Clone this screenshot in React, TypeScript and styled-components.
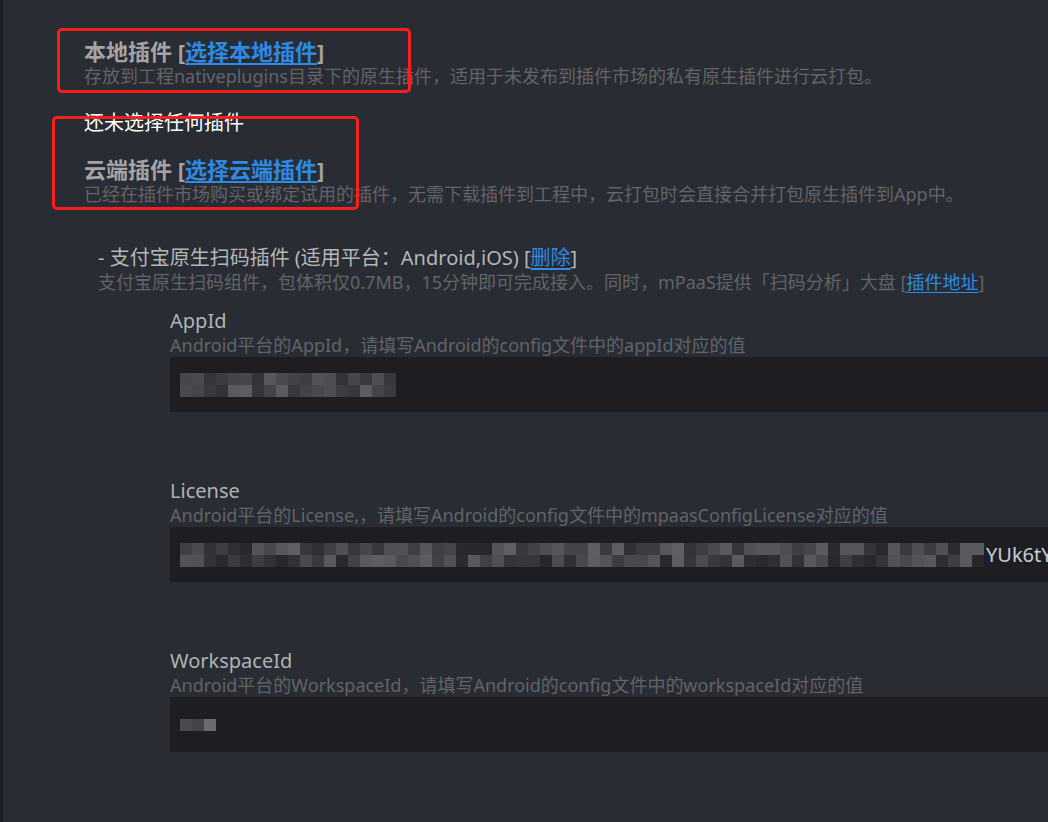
import React from "react";
import styled, { createGlobalStyle } from "styled-components";

const GlobalStyle = createGlobalStyle`
  html, body {
    margin: 0;
    padding: 0;
    background: #282c34;
  }
  body {
    font-family: "Noto Sans", "Noto Sans CJK SC", sans-serif;
  }
`;

const Page = styled.div`
  position: relative;
  min-height: 822px;
  overflow: hidden;
  background: #282c34;
  border-left: 3px solid #1c1e23;
  box-sizing: border-box;
  padding: 38px 0 40px 81px;
`;

const Section = styled.section`
  display: flex;
  flex-direction: column;
`;

const SectionTitle = styled.div`
  font-size: 22px;
  line-height: 26px;
  font-weight: 700;
  color: #a4a4a4;
  white-space: nowrap;
`;

const Link = styled.a`
  color: #2e8ae3;
  text-decoration: underline;
  text-underline-offset: 3px;
  cursor: pointer;
`;

const Hint = styled.div`
  font-size: 18px;
  line-height: 24px;
  color: #626468;
  white-space: nowrap;
`;

const EmptyNote = styled.div`
  margin-top: 23px;
  margin-bottom: 21px;
  font-size: 20px;
  line-height: 24px;
  color: #ffffff;
`;

const PluginBlock = styled.div`
  margin-top: 40px;
  padding-left: 14px;
  display: flex;
  flex-direction: column;
`;

const PluginName = styled.div`
  font-size: 20px;
  line-height: 24px;
  color: #b6b6b6;
  white-space: nowrap;
`;

const Fields = styled.div`
  margin-top: 14px;
  padding-left: 72px;
  display: flex;
  flex-direction: column;
  gap: 66px;
`;

const Field = styled.div`
  display: flex;
  flex-direction: column;
`;

const FieldLabel = styled.div`
  font-size: 20px;
  line-height: 25px;
  color: #b2b2b2;
`;

const InputBox = styled.div`
  height: 55px;
  margin-right: -20px;
  background: #1d1e23;
  display: flex;
  align-items: center;
  padding-left: 10px;
  overflow: hidden;
  white-space: nowrap;
`;

const InputText = styled.span`
  font-size: 20px;
  color: #c9ccd2;
  margin-left: 2px;
`;

const MosaicGrid = styled.div<{ $cols: number; $cell: number }>`
  display: grid;
  grid-template-columns: repeat(${(p) => p.$cols}, ${(p) => p.$cell}px);
  grid-auto-rows: ${(p) => p.$cell}px;
  flex-shrink: 0;
`;

const Cell = styled.span`
  display: block;
`;

const Annotation = styled.div`
  position: absolute;
  border: 3px solid #fb1f1b;
  border-radius: 5px;
  pointer-events: none;
`;

function shades(seed: number, count: number, lo: number, hi: number): string[] {
  const out: string[] = [];
  let s = seed;
  for (let i = 0; i < count; i++) {
    s = (s * 9301 + 49297) % 233280;
    const v = Math.round(lo + (s / 233280) * (hi - lo));
    out.push(`rgb(${v}, ${v + 1}, ${v + 5})`);
  }
  return out;
}

const Mosaic: React.FC<{ cols: number; rows: number; cell: number; seed: number; lo: number; hi: number }> = ({
  cols,
  rows,
  cell,
  seed,
  lo,
  hi,
}) => {
  const colours = shades(seed, cols * rows, lo, hi);
  return (
    <MosaicGrid $cols={cols} $cell={cell}>
      {colours.map((c, i) => (
        <Cell key={i} style={{ background: c }} />
      ))}
    </MosaicGrid>
  );
};

const fields = [
  {
    label: "AppId",
    hint: "Android平台的AppId，请填写Android的config文件中的appId对应的值",
    mosaic: { cols: 18, rows: 2, cell: 12, seed: 7, lo: 48, hi: 92 },
    tail: "",
  },
  {
    label: "License",
    hint: "Android平台的License,，请填写Android的config文件中的mpaasConfigLicense对应的值",
    mosaic: { cols: 67, rows: 2, cell: 12, seed: 31, lo: 38, hi: 96 },
    tail: "YUk6tYj",
  },
  {
    label: "WorkspaceId",
    hint: "Android平台的WorkspaceId，请填写Android的config文件中的workspaceId对应的值",
    mosaic: { cols: 3, rows: 1, cell: 12, seed: 3, lo: 56, hi: 110 },
    tail: "",
  },
];

const App: React.FC = () => {
  return (
    <>
      <GlobalStyle />
      <Page>
        <Section>
          <SectionTitle>
            本地插件 [<Link>选择本地插件</Link>]
          </SectionTitle>
          <Hint>存放到工程nativeplugins目录下的原生插件，适用于未发布到插件市场的私有原生插件进行云打包。</Hint>
        </Section>

        <EmptyNote>还未选择任何插件</EmptyNote>

        <Section>
          <SectionTitle>
            云端插件 [<Link>选择云端插件</Link>]
          </SectionTitle>
          <Hint>已经在插件市场购买或绑定试用的插件，无需下载插件到工程中，云打包时会直接合并打包原生插件到App中。</Hint>
        </Section>

        <PluginBlock>
          <PluginName>
            - 支付宝原生扫码插件 (适用平台：Android,iOS) [<Link>删除</Link>]
          </PluginName>
          <Hint>
            支付宝原生扫码组件，包体积仅0.7MB，15分钟即可完成接入。同时，mPaaS提供「扫码分析」大盘 [<Link>插件地址</Link>]
          </Hint>

          <Fields>
            {fields.map((f) => (
              <Field key={f.label}>
                <FieldLabel>{f.label}</FieldLabel>
                <Hint>{f.hint}</Hint>
                <InputBox>
                  <Mosaic {...f.mosaic} />
                  {f.tail && <InputText>{f.tail}</InputText>}
                </InputBox>
              </Field>
            ))}
          </Fields>
        </PluginBlock>

        <Annotation style={{ left: 54, top: 28, width: 348, height: 59 }} />
        <Annotation style={{ left: 49, top: 116, width: 301, height: 88 }} />
      </Page>
    </>
  );
};

export default App;
